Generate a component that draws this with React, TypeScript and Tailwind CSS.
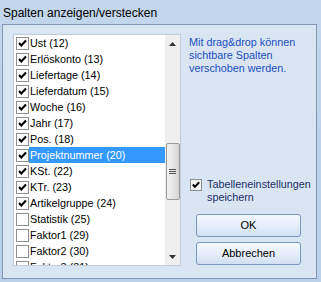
import React from "react";

const items: { label: string; checked: boolean; selected?: boolean }[] = [
  { label: "Ust (12)", checked: true },
  { label: "Erlöskonto (13)", checked: true },
  { label: "Liefertage (14)", checked: true },
  { label: "Lieferdatum (15)", checked: true },
  { label: "Woche (16)", checked: true },
  { label: "Jahr (17)", checked: true },
  { label: "Pos. (18)", checked: true },
  { label: "Projektnummer (20)", checked: true, selected: true },
  { label: "KSt. (22)", checked: true },
  { label: "KTr. (23)", checked: true },
  { label: "Artikelgruppe (24)", checked: true },
  { label: "Statistik (25)", checked: false },
  { label: "Faktor1 (29)", checked: false },
  { label: "Faktor2 (30)", checked: false },
  { label: "Faktor3 (31)", checked: false },
];

function Check({ checked }: { checked: boolean }) {
  return (
    <div className="w-[13px] h-[13px] shrink-0 border border-[#8e8f8f] bg-white flex items-center justify-center">
      {checked && (
        <svg width="11" height="11" viewBox="0 0 11 11">
          <path d="M2 5 L4.3 7.5 L9 2.5" stroke="#000" strokeWidth="2.2" fill="none" />
        </svg>
      )}
    </div>
  );
}

export default function App() {
  return (
    <div
      className="w-[321px] h-[282px] overflow-hidden bg-gradient-to-b from-[#c2d6ec] to-[#b9d0ea] flex flex-col"
      style={{ fontFamily: '"Liberation Sans", Arial, sans-serif' }}
    >
      <div className="h-[24px] pl-[3px] pt-[4px] text-[12px] text-black">
        Spalten anzeigen/verstecken
      </div>
      <div className="ml-[2px] mr-[4px] h-[255px] border border-[#8197b5] bg-[#dae5f4] flex pl-[10px] pt-[9px]">
        {/* list box */}
        <div className="w-[168px] h-[232px] border border-[#c2cbd6] bg-white flex overflow-hidden">
          <div className="flex-1 flex flex-col overflow-hidden">
            {items.map((it) => (
              <div key={it.label} className="h-[16px] shrink-0 flex items-center pl-[2px]">
                <Check checked={it.checked} />
                <span
                  className={
                    "h-[16px] flex-1 pl-[1px] text-[10.8px] leading-[16px] whitespace-nowrap " +
                    (it.selected ? "bg-[#3399ff] text-white" : "text-black")
                  }
                >
                  {it.label}
                </span>
              </div>
            ))}
          </div>
          {/* scrollbar */}
          <div className="w-[15px] bg-[#efefef] flex flex-col items-center">
            <div className="h-[17px] flex items-center justify-center">
              <svg width="7" height="4" viewBox="0 0 7 4">
                <path d="M0 4 L3.5 0 L7 4 Z" fill="#333" />
              </svg>
            </div>
            <div className="h-[91px]" />
            <div className="w-[14px] h-[57px] border border-[#9a9a9a] rounded-[2px] bg-gradient-to-r from-[#f3f3f3] via-[#e6e6e6] to-[#d4d4d4] flex flex-col items-center justify-center gap-[1px]">
              <div className="w-[7px] h-[1px] bg-[#555]" />
              <div className="w-[7px] h-[1px] bg-[#555]" />
              <div className="w-[7px] h-[1px] bg-[#555]" />
            </div>
            <div className="flex-1" />
            <div className="h-[17px] flex items-center justify-center">
              <svg width="7" height="4" viewBox="0 0 7 4">
                <path d="M0 0 L7 0 L3.5 4 Z" fill="#333" />
              </svg>
            </div>
          </div>
        </div>
        {/* right column */}
        <div className="ml-[8px] flex flex-col w-[120px]">
          <div className="pt-[2px] text-[10.8px] leading-[13px] text-[#1a4fc0] whitespace-nowrap">
            Mit drag&amp;drop können
            <br />
            sichtbare Spalten
            <br />
            verschoben werden.
          </div>
          <div className="mt-[103px] flex items-start">
            <div className="mt-[1px] ml-[1px] w-[12px] h-[12px] shrink-0 border border-[#8e8f8f] bg-[#f2f2f2] flex items-center justify-center">
              <svg width="10" height="10" viewBox="0 0 11 11">
                <path d="M2 5 L4.3 7.5 L9 2.5" stroke="#000" strokeWidth="2.2" fill="none" />
              </svg>
            </div>
            <div className="ml-[5px] text-[10.8px] leading-[13px] text-[#1b2f66] whitespace-nowrap">
              Tabelleneinstellungen
              <br />
              speichern
            </div>
          </div>
          <button className="mt-[10px] ml-[7px] w-[105px] h-[23px] rounded-[3px] border border-[#7a97bf] bg-gradient-to-b from-[#f4f8fd] via-[#e6eefa] to-[#d2e0f3] text-[11px] text-black">
            OK
          </button>
          <button className="mt-[5px] ml-[7px] w-[105px] h-[23px] rounded-[3px] border border-[#7a97bf] bg-gradient-to-b from-[#f4f8fd] via-[#e6eefa] to-[#d2e0f3] text-[11px] text-black">
            Abbrechen
          </button>
        </div>
      </div>
    </div>
  );
}
